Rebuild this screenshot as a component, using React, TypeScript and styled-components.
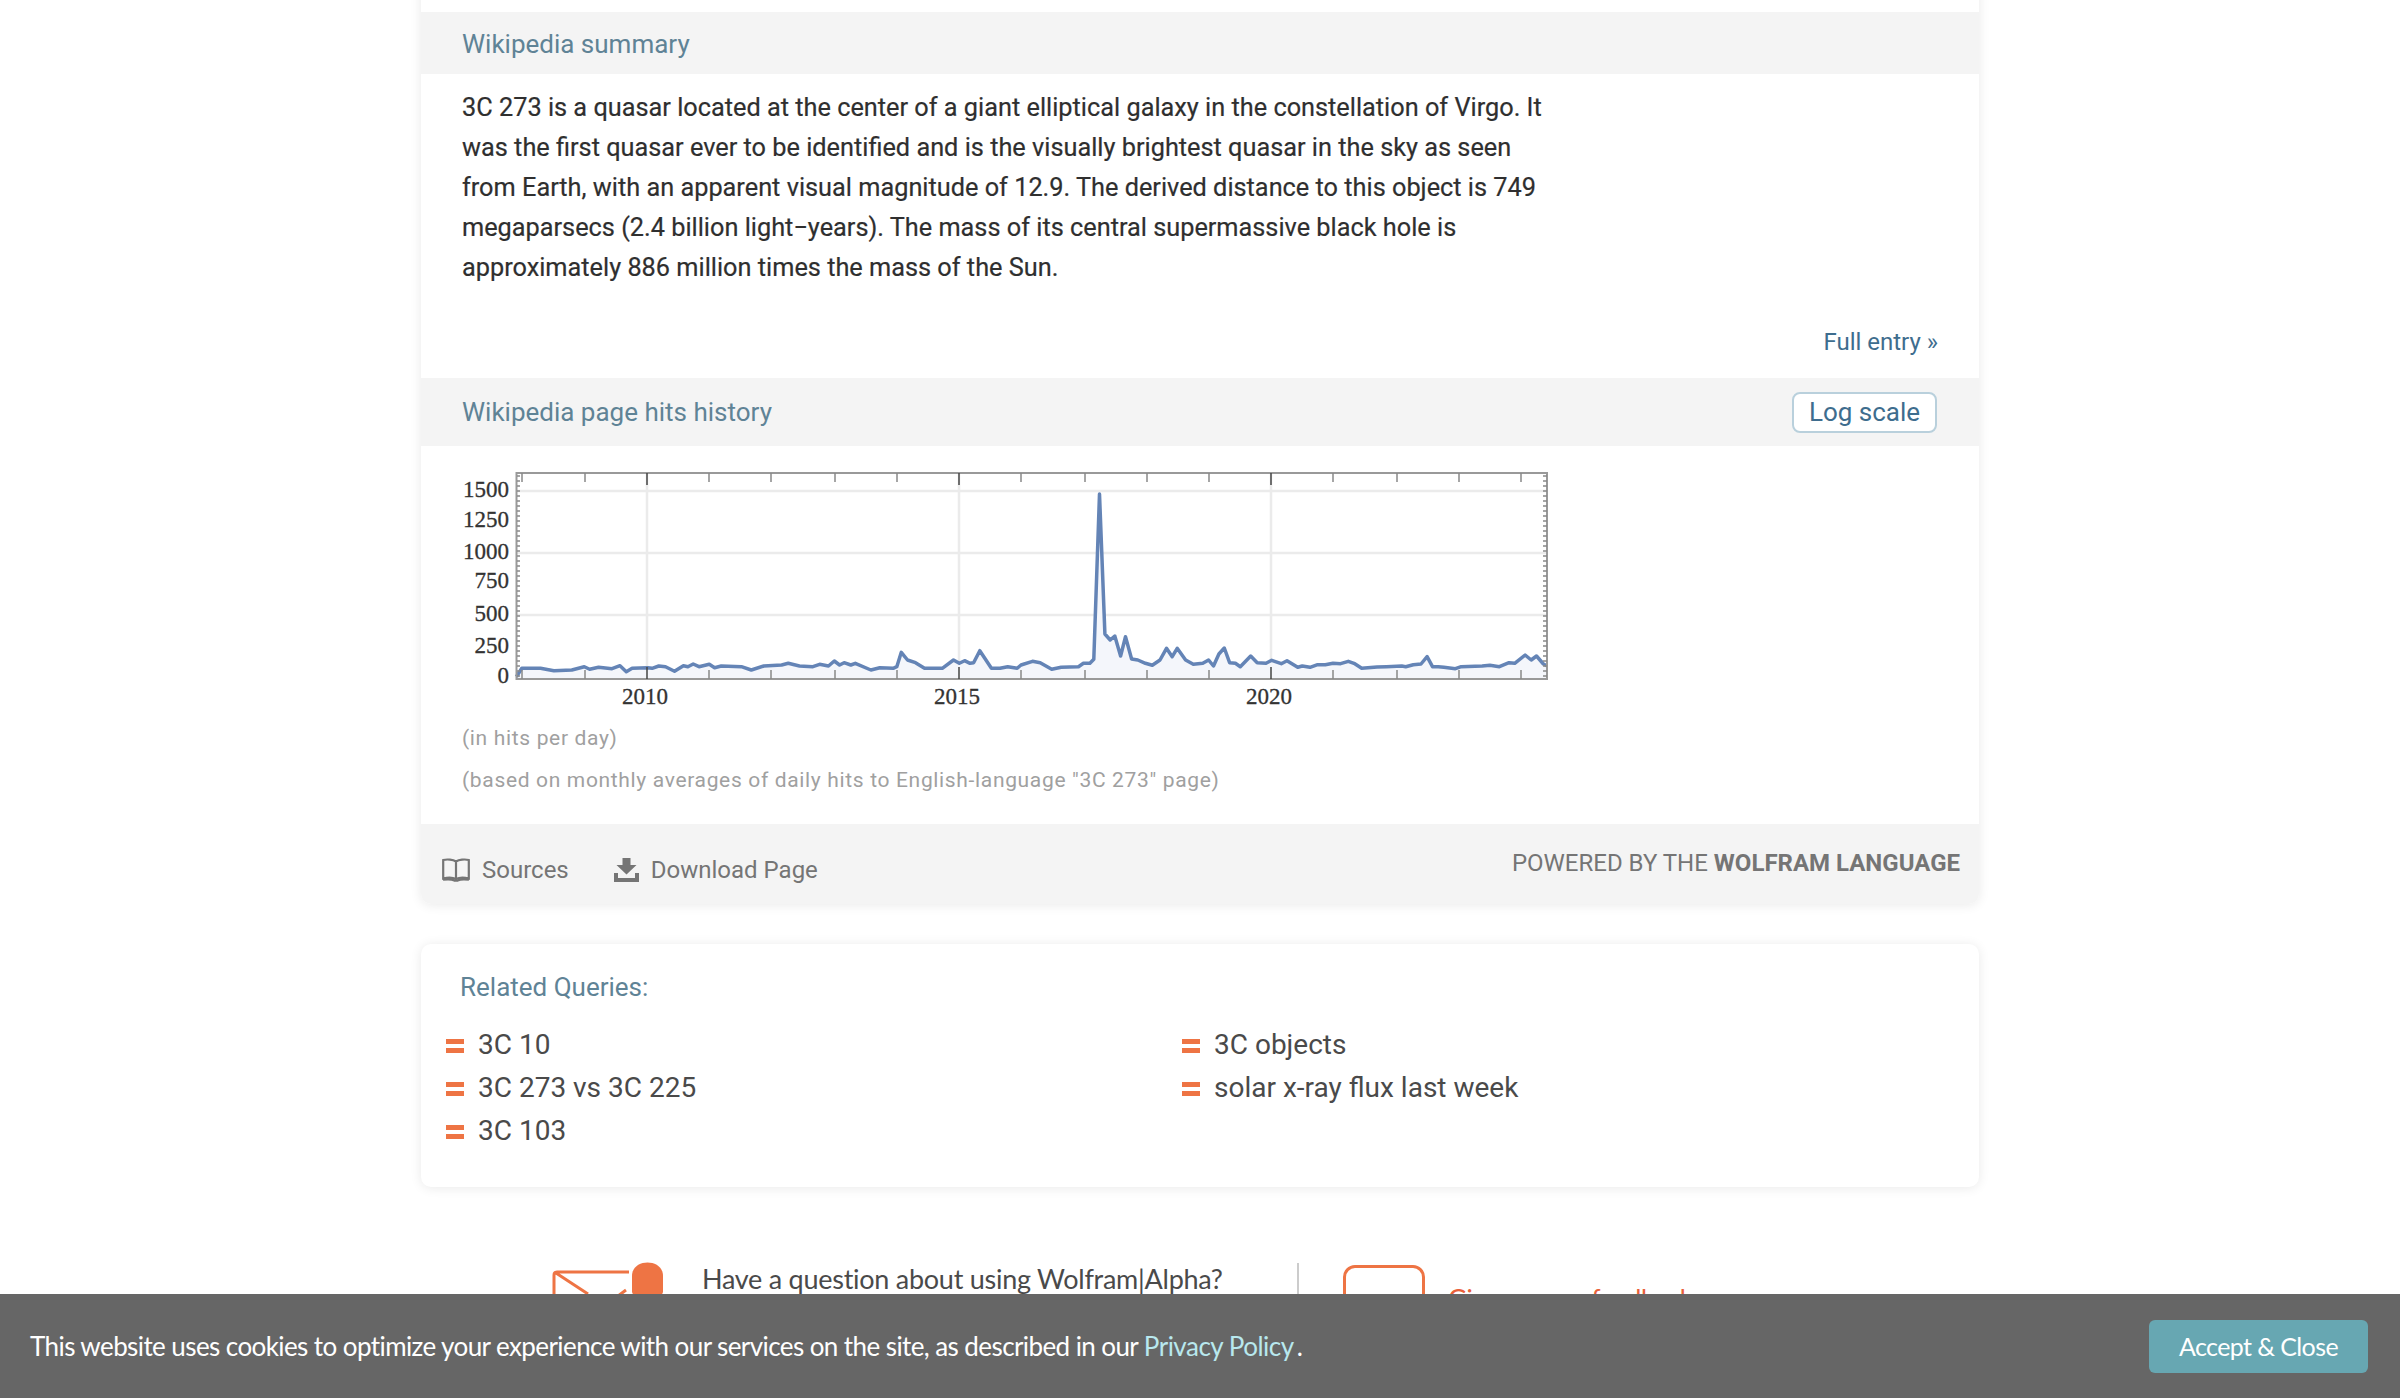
import styled, { createGlobalStyle } from "styled-components";

const GlobalStyle = createGlobalStyle`
  html, body {
    margin: 0;
    height: 1398px;
    overflow: hidden;
    background: #fff;
    font-family: Roboto, "Liberation Sans", sans-serif;
  }
`;

const Page = styled.div`
  width: 1558px;
  margin: 0 auto;
`;

const Card = styled.section`
  margin-top: -20px;
  padding-top: 32px;
  background: #fff;
  border-radius: 0 0 10px 10px;
  box-shadow: 0 1px 12px rgba(0, 0, 0, 0.09);
`;

const SectionHead = styled.div<{ $h: number; $top?: number }>`
  height: ${(p) => p.$h}px;
  box-sizing: border-box;
  padding: ${(p) => p.$top ?? 0}px 42px 0 41px;
  background: #f4f4f4;
  display: flex;
  align-items: center;
  justify-content: space-between;
  color: #5f8396;
  font-size: 26px;
`;

const Summary = styled.p`
  margin: 0;
  padding: 14px 41px 0;
  width: 1100px;
  font-size: 25.3px;
  line-height: 40px;
  color: #2f2f2f;
  -webkit-text-stroke: 0.2px #2f2f2f;
`;

const EntryRow = styled.div`
  display: flex;
  justify-content: flex-end;
  padding: 39px 41px 20px;
  font-size: 24px;
  line-height: 31px;
  color: #3e6d8e;
`;

const LogButton = styled.button`
  width: 145px;
  height: 41px;
  padding: 0;
  background: #fff;
  border: 2px solid #b9d0dc;
  border-radius: 8px;
  color: #3e6d8e;
  font: 26px Roboto, sans-serif;
`;

const ChartWrap = styled.div`
  padding: 24px 0 0 39px;
  height: 247px;
`;

const Note = styled.p`
  margin: 0;
  padding-left: 41px;
  color: #a0a0a0;
  font-size: 21px;
  line-height: 42px;
  letter-spacing: 0.66px;
`;

const Notes = styled.div`
  padding-bottom: 23px;
`;

const Footer = styled.div`
  height: 80px;
  background: #f4f4f4;
  border-radius: 0 0 10px 10px;
  display: flex;
  align-items: center;
  justify-content: space-between;
  padding: 0 19px 0 21px;
  color: #757575;
  font-size: 24px;
`;

const FooterLinks = styled.div`
  display: flex;
  gap: 45px;
  padding-top: 12px;
`;

const FooterLink = styled.span<{ $gap: number }>`
  display: flex;
  align-items: center;
  gap: ${(p) => p.$gap}px;
`;

const Powered = styled.div`
  padding-bottom: 2px;
  b { font-weight: 700; }
`;

const RelatedCard = styled.section`
  margin-top: 40px;
  height: 243px;
  background: #fff;
  border-radius: 10px;
  box-shadow: 0 1px 12px rgba(0, 0, 0, 0.09);
  box-sizing: border-box;
  padding: 25px 0 0 25px;
`;

const RelatedTitle = styled.div`
  padding-left: 14px;
  color: #5f8396;
  font-size: 26px;
  line-height: 36px;
  margin-bottom: 18px;
`;

const RelatedGrid = styled.div`
  display: grid;
  grid-template-columns: 736px 1fr;
  grid-auto-flow: column;
  grid-template-rows: repeat(3, 43px);
`;

const Query = styled.div`
  display: flex;
  align-items: center;
  gap: 14px;
  color: #4a4a4a;
  font-size: 28px;
`;

const Equals = styled.span`
  width: 18px;
  height: 14px;
  flex: none;
  margin-top: 3px;
  border-top: 5px solid #ee7444;
  border-bottom: 5px solid #ee7444;
  box-sizing: border-box;
`;

const Help = styled.div`
  margin-top: 75px;
  padding-left: 131px;
  display: flex;
  color: #4a4a4a;
  font-family: Lato, sans-serif;
`;

const HelpQuestion = styled.div`
  display: flex;
  gap: 38px;
  width: 745px;
  font-size: 27px;
  letter-spacing: -0.26px;
  line-height: 36px;
`;

const HelpText = styled.div`
  margin-top: -1px;
`;

const Divider = styled.div`
  width: 2px;
  height: 90px;
  margin-top: 1px;
  background: #ccc;
  margin-right: 44px;
`;

const Feedback = styled.div`
  display: flex;
  gap: 23px;
  color: #e9603a;
  font-size: 26px;
  letter-spacing: -0.35px;
  line-height: 36px;
`;

const FeedbackIcon = styled.div`
  width: 76px;
  height: 60px;
  margin-top: 3px;
  border: 3px solid #ee7444;
  border-radius: 12px;
`;

const FeedbackText = styled.div`
  margin-top: 19px;
`;

const CookieBar = styled.div`
  position: fixed;
  left: 0;
  right: 0;
  bottom: 0;
  height: 104px;
  background: #666;
  display: flex;
  align-items: center;
  justify-content: space-between;
  padding: 0 32px 0 30px;
  color: #fff;
  font-family: Lato, sans-serif;
  font-size: 26px;
  letter-spacing: -0.585px;
`;

const CookieLink = styled.span`
  color: #b8e8ee;
  letter-spacing: -0.5px;
  margin-right: 3px;
`;

const AcceptButton = styled.button`
  width: 219px;
  height: 53px;
  background: #67a7b2;
  border: 0;
  border-radius: 6px;
  color: #fff;
  font: 25px Lato, sans-serif;
  letter-spacing: -0.6px;
`;

const ChartText = styled.text`
  font-family: "Liberation Serif", serif;
  font-size: 23px;
  fill: #333;
  stroke: #333;
  stroke-width: 0.3px;
`;

const z2 = [[216,680],[228,655],[270,655],[300,662],[340,660],[368,650],[380,658],[400,652],[430,656],[448,647],[462,665],[475,655],[510,653],[520,655],[535,648],[550,650],[570,664],[590,647],[600,650],[612,642],[625,650],[648,643],[660,653],[675,648],[720,650],[742,660],[770,648],[810,645],[825,640],[850,648],[880,650],[895,643],[915,648],[928,633],[940,645],[950,638],[965,645],[975,640],[1010,660],[1030,653],[1060,655],[1068,650],[1078,607],[1092,630],[1110,638],[1130,655],[1170,655],[1195,630],[1208,640],[1220,632],[1232,640],[1240,638],[1254,602],[1280,655]];
const z3 = [[0,655],[20,650],[45,655],[55,645],[85,634],[105,638],[135,658],[160,652],[205,650],[218,640],[235,640],[245,628],[260,132],[274,552],[288,570],[300,558],[315,618],[328,560],[344,627],[360,630],[380,640],[398,646],[418,630],[435,595],[450,620],[463,595],[485,630],[505,643],[530,640],[545,630],[558,648],[572,612],[586,594],[600,638],[615,640],[628,650],[655,618],[672,638],[695,640],[710,631],[735,641],[750,632],[778,652],[790,648],[810,652],[830,644],[850,644],[870,640],[890,641],[910,634],[925,640],[945,655],[985,651],[1010,650],[1050,648],[1060,650],[1080,644],[1100,642],[1116,620],[1130,650],[1145,650],[1160,652],[1190,656],[1205,650],[1260,648],[1280,646],[1305,650],[1330,638],[1345,640],[1372,615],[1388,630],[1402,618],[1420,642],[1430,648]];

// traced from crops of the plot, chart origin on the page is (460, 470)
const trace = [
  ...z2.map(([x, y]) => [420 + x / 2.24 - 460, 450 + y / 3 - 470]),
  ...z3.map(([x, y]) => [1000 + x / 2.613 - 460, 450 + y / 3 - 470]),
];
const line = trace.map(([x, y]) => `${x.toFixed(1)},${y.toFixed(1)}`).join(" ");
const area = `56.500,209 ${line} 1087,209`;

const yLabels: [string, number][] = [
  ["1500", 27],
  ["1250", 57],
  ["1000", 89],
  ["750", 118],
  ["500", 151],
  ["250", 183],
  ["0", 213],
];
const xLabels: [string, number][] = [["2010", 185], ["2015", 497], ["2020", 809]];
const majorX = [187, 499, 811];
const minorX = [62, 125, 249, 311, 375, 437, 561, 625, 687, 749, 873, 937, 999, 1061];
const sideTicks = Array.from({ length: 41 }, (_, i) => 6 + i * 5);

const PageHitsChart = () => (
  <svg width="1100" height="246" viewBox="0 0 1100 246">
    <g stroke="#ebebeb" strokeWidth="2.500">
      <line x1="57" x2="1087" y1="21" y2="21" />
      <line x1="57" x2="1087" y1="83" y2="83" />
      <line x1="57" x2="1087" y1="145" y2="145" />
      {majorX.map((x) => (
        <line key={x} x1={x} x2={x} y1="3" y2="209" />
      ))}
    </g>
    <polygon points={area} fill="#f4f6fb" />
    <polyline points={line} fill="none" stroke="#6484b6" strokeWidth="3.500" strokeLinejoin="round" />
    <rect x="56.500" y="3" width="1030.500" height="206" fill="none" stroke="#999" strokeWidth="2" />
    <g stroke="#888" strokeWidth="1.500">
      {majorX.map((x) => (
        <g key={x} stroke="#444">
          <line x1={x} x2={x} y1="3" y2="15" />
          <line x1={x} x2={x} y1="197" y2="209" />
        </g>
      ))}
      {minorX.map((x) => (
        <g key={x}>
          <line x1={x} x2={x} y1="3" y2="12" />
          <line x1={x} x2={x} y1="200" y2="209" />
        </g>
      ))}
      {sideTicks.map((y) => (
        <g key={y}>
          <line x1="57" x2="60" y1={y} y2={y} />
          <line x1="1083" x2="1087" y1={y} y2={y} />
        </g>
      ))}
    </g>
    {yLabels.map(([t, y]) => (
      <ChartText key={t} x="49" y={y} textAnchor="end">{t}</ChartText>
    ))}
    {xLabels.map(([t, x]) => (
      <ChartText key={t} x={x} y="234" textAnchor="middle">{t}</ChartText>
    ))}
  </svg>
);

const BookIcon = () => (
  <svg width="28" height="24" viewBox="0 0 28 24" fill="none" stroke="#757575" strokeWidth="2.200">
    <path d="M14 3.500C11 1.500 5 1 1.200 2V20.500C5 19.500 11 19.500 14 21C17 19.500 23 19.500 26.800 20.500V2C23 1 17 1.500 14 3.500V21" />
    <path d="M1 21.500C6 20.800 10 21 12.500 22.500H15.500C18 21 22 20.800 27 21.500" strokeWidth="2.600" />
  </svg>
);

const DownloadIcon = () => (
  <svg width="25" height="24" viewBox="0 0 25 24" fill="#757575">
    <path d="M8.500 0H16.500V7H22.500L12.500 16.500L2.500 7H8.500Z" />
    <path d="M0 15H4V20H21V15H25V24H0Z" />
  </svg>
);

const MailIcon = () => (
  <svg width="112" height="60" viewBox="0 0 112 60">
    <path d="M2 60V13Q2 10 5 10H77M4 11L36 32M74 28L66 34" fill="none" stroke="#ee7444" strokeWidth="3" />
    <path d="M80 14C80 -4 111 -4 111 14V30L107 40H84L80 30Z" fill="#ee7444" />
  </svg>
);

export default function App() {
  return (
    <>
      <GlobalStyle />
      <Page>
        <Card>
          <SectionHead $h={62} $top={2}>Wikipedia summary</SectionHead>
          <Summary>
            3C 273 is a quasar located at the center of a giant elliptical galaxy in the constellation of Virgo. It was
            the first quasar ever to be identified and is the visually brightest quasar in the sky as seen from Earth,
            with an apparent visual magnitude of 12.9. The derived distance to this object is 749 megaparsecs (2.4
            billion light−years). The mass of its central supermassive black hole is approximately 886 million times the
            mass of the Sun.
          </Summary>
          <EntryRow>Full entry »</EntryRow>
          <SectionHead $h={68}>
            Wikipedia page hits history
            <LogButton>Log scale</LogButton>
          </SectionHead>
          <ChartWrap>
            <PageHitsChart />
          </ChartWrap>
          <Notes>
            <Note>(in hits per day)</Note>
            <Note>(based on monthly averages of daily hits to English-language "3C 273" page)</Note>
          </Notes>
          <Footer>
            <FooterLinks>
              <FooterLink $gap={12}><BookIcon />Sources</FooterLink>
              <FooterLink $gap={12}><DownloadIcon />Download Page</FooterLink>
            </FooterLinks>
            <Powered>POWERED BY THE <b>WOLFRAM LANGUAGE</b></Powered>
          </Footer>
        </Card>
        <RelatedCard>
          <RelatedTitle>Related Queries:</RelatedTitle>
          <RelatedGrid>
            {["3C 10", "3C 273 vs 3C 225", "3C 103", "3C objects", "solar x-ray flux last week"].map((q) => (
              <Query key={q}><Equals />{q}</Query>
            ))}
          </RelatedGrid>
        </RelatedCard>
        <Help>
          <HelpQuestion>
            <MailIcon />
            <HelpText>Have a question about using Wolfram|Alpha?</HelpText>
          </HelpQuestion>
          <Divider />
          <Feedback>
            <FeedbackIcon />
            <FeedbackText>Give us your feedback</FeedbackText>
          </Feedback>
        </Help>
      </Page>
      <CookieBar>
        <span>
          This website uses cookies to optimize your experience with our services on the site, as described in our{" "}
          <CookieLink>Privacy Policy</CookieLink>.
        </span>
        <AcceptButton>Accept &amp; Close</AcceptButton>
      </CookieBar>
    </>
  );
}
